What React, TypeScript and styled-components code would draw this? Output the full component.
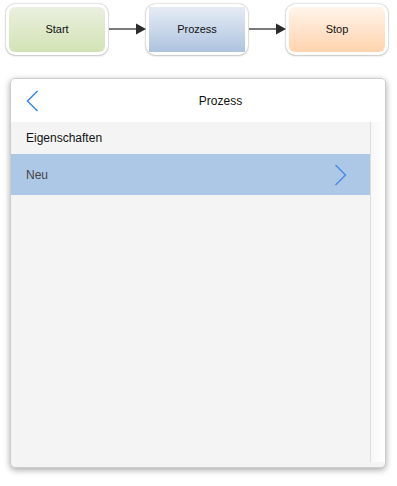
import React from "react";
import styled, { createGlobalStyle } from "styled-components";

const Global = createGlobalStyle`
  html, body { margin: 0; padding: 0; background: #ffffff; }
  body { font-family: "Liberation Sans", Arial, sans-serif; }
`;

const Page = styled.div`
  width: 397px;
  height: 486px;
  display: flex;
  flex-direction: column;
`;

const Diagram = styled.div`
  display: flex;
  align-items: center;
  padding: 3px 0 0 6px;
  height: 52px;
`;

type Tone = "green" | "blue" | "orange";

const gradients: Record<Tone, string> = {
  green: "linear-gradient(#eaf0df, #d3e2b5)",
  blue: "linear-gradient(#e6ecf5, #aec3df)",
  orange: "linear-gradient(#fff4ea, #ffd3ad)",
};

const NodeFrame = styled.div`
  padding: 3px;
  background: #ffffff;
  border-radius: 9px;
  box-shadow: 0 0 2px rgba(0, 0, 0, 0.35), 0 1px 2px rgba(0, 0, 0, 0.15);
`;

const NodeBox = styled.div<{ $tone: Tone; $square?: boolean }>`
  width: 96px;
  height: 45px;
  border-radius: ${(p) => (p.$square ? "0" : "6px")};
  background: ${(p) => gradients[p.$tone]};
  display: flex;
  align-items: center;
  justify-content: center;
  font-size: 11px;
  color: #111;
`;

const ArrowWrap = styled.div`
  width: 38px;
  height: 12px;
  display: flex;
`;

const Arrow = () => (
  <ArrowWrap>
    <svg width="38" height="12" viewBox="0 0 38 12">
      <line x1="1" y1="6" x2="29" y2="6" stroke="#6b6b6b" strokeWidth="1.8" />
      <polygon points="28,0.5 38,6 28,11.5" fill="#2b2b2b" />
    </svg>
  </ArrowWrap>
);

const Panel = styled.div`
  margin: 23px 0 0 10px;
  width: 374px;
  height: 388px;
  border: 1px solid #cdcdcd;
  border-radius: 5px;
  background: #f4f4f4;
  box-shadow: 0 2px 6px rgba(0, 0, 0, 0.35);
  display: flex;
  flex-direction: column;
  overflow: hidden;
`;

const Header = styled.div`
  height: 43px;
  background: #ffffff;
  display: flex;
  align-items: center;
`;

const BackButton = styled.div`
  width: 45px;
  height: 43px;
  display: flex;
  align-items: center;
  padding-left: 15px;
  box-sizing: border-box;
`;

const Title = styled.div`
  flex: 1;
  text-align: center;
  font-size: 12px;
  color: #111;
`;

const Body = styled.div`
  flex: 1;
  display: flex;
`;

const List = styled.div`
  flex: 1;
  display: flex;
  flex-direction: column;
`;

const SectionHeader = styled.div`
  height: 32px;
  display: flex;
  align-items: center;
  padding-left: 15px;
  font-size: 12px;
  color: #111;
`;

const Row = styled.div<{ $selected?: boolean }>`
  height: 41px;
  display: flex;
  align-items: center;
  justify-content: space-between;
  padding: 0 23px 0 15px;
  font-size: 12px;
  color: #454545;
  background: ${(p) => (p.$selected ? "#adc8e6" : "transparent")};
`;

const ScrollTrack = styled.div`
  width: 14px;
  margin-bottom: 5px;
  border-left: 1px solid #dedede;
  background: linear-gradient(90deg, #f7f7f7, #ffffff);
`;

const Chevron = ({ dir }: { dir: "left" | "right" }) => (
  <svg width="13" height="22" viewBox="0 0 13 22">
    <polyline
      points={dir === "left" ? "11.5,1 1.5,11 11.5,21" : "1.5,1 11.5,11 1.5,21"}
      fill="none"
      stroke={dir === "left" ? "#3a86f0" : "#4a8ce6"}
      strokeWidth="1.5"
    />
  </svg>
);

export default function App() {
  return (
    <Page>
      <Global />
      <Diagram>
        <NodeFrame>
          <NodeBox $tone="green">Start</NodeBox>
        </NodeFrame>
        <Arrow />
        <NodeFrame>
          <NodeBox $tone="blue" $square>Prozess</NodeBox>
        </NodeFrame>
        <Arrow />
        <NodeFrame>
          <NodeBox $tone="orange">Stop</NodeBox>
        </NodeFrame>
      </Diagram>
      <Panel>
        <Header>
          <BackButton>
            <Chevron dir="left" />
          </BackButton>
          <Title>Prozess</Title>
        </Header>
        <Body>
          <List>
            <SectionHeader>Eigenschaften</SectionHeader>
            <Row $selected>
              <span>Neu</span>
              <Chevron dir="right" />
            </Row>
          </List>
          <ScrollTrack />
        </Body>
      </Panel>
    </Page>
  );
}
